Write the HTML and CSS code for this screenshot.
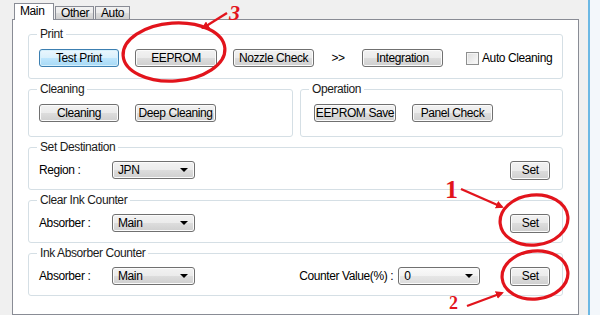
FILE: index.html
```html
<!DOCTYPE html>
<html lang="en">
<head>
    <meta charset="UTF-8">
    <title>Maintenance</title>
    <link rel="stylesheet" href="styles.css">
</head>
<body>

<div class="window">
    <div class="tabctl">
        <div class="tabs">
            <div class="tab active">Main</div>
            <div class="tab tab-other">Other</div>
            <div class="tab tab-auto">Auto</div>
        </div>

        <div class="panel">
            <!-- Print -->
            <fieldset class="group print">
                <legend>Print</legend>
                <div class="btn-row">
                    <button class="btn default w80">Test Print</button>
                    <button class="btn w82">EEPROM</button>
                    <button class="btn w81">Nozzle Check</button>
                    <span class="next">&gt;&gt;</span>
                    <button class="btn w81">Integration</button>
                    <label class="check"><span class="box"></span>Auto Cleaning</label>
                </div>
            </fieldset>

            <div class="pair">
                <fieldset class="group cleaning">
                    <legend>Cleaning</legend>
                    <div class="btn-row">
                        <button class="btn w80">Cleaning</button>
                        <button class="btn w81">Deep Cleaning</button>
                    </div>
                </fieldset>
                <fieldset class="group operation">
                    <legend>Operation</legend>
                    <div class="btn-row">
                        <button class="btn w82">EEPROM Save</button>
                        <button class="btn w81">Panel Check</button>
                    </div>
                </fieldset>
            </div>

            <fieldset class="group setting">
                <legend>Set Destination</legend>
                <div class="row">
                    <span class="label">Region :</span>
                    <div class="combo"><span>JPN</span><i class="arrow"></i></div>
                    <button class="btn set">Set</button>
                </div>
            </fieldset>

            <fieldset class="group setting">
                <legend>Clear Ink Counter</legend>
                <div class="row">
                    <span class="label">Absorber :</span>
                    <div class="combo"><span>Main</span><i class="arrow"></i></div>
                    <button class="btn set">Set</button>
                </div>
            </fieldset>

            <fieldset class="group setting">
                <legend>Ink Absorber Counter</legend>
                <div class="row">
                    <span class="label">Absorber :</span>
                    <div class="combo"><span>Main</span><i class="arrow"></i></div>
                    <span class="counter-label">Counter Value(%) :</span>
                    <div class="combo value"><span>0</span><i class="arrow"></i></div>
                    <button class="btn set near">Set</button>
                </div>
            </fieldset>
        </div>
    </div>
    <div class="side"></div>
</div>

<!-- marcas vermelhas por cima da janela -->
<svg class="marks" width="600" height="315" viewBox="0 0 600 315">
    <defs>
        <marker id="head" markerWidth="8" markerHeight="8" refX="6" refY="4" orient="auto" markerUnits="userSpaceOnUse">
            <path d="M0,0 L8,4 L0,8 Z" fill="#e2141c"/>
        </marker>
    </defs>
    <ellipse cx="174" cy="52" rx="51" ry="29" transform="rotate(-4 174 52)"/>
    <ellipse cx="534" cy="220" rx="34" ry="25" transform="rotate(-6 534 220)"/>
    <ellipse cx="535" cy="275" rx="33" ry="24" transform="rotate(-6 535 275)"/>
    <line x1="227" y1="13" x2="203" y2="28" marker-end="url(#head)"/>
    <line x1="461" y1="189" x2="502" y2="207" marker-end="url(#head)"/>
    <line x1="467" y1="306" x2="502" y2="293" marker-end="url(#head)"/>
    <text x="229" y="20" class="num italic">3</text>
    <text x="445" y="198" class="num">1</text>
    <text x="449" y="309" class="num small">2</text>
</svg>

</body>
</html>
```

FILE: styles.css
```css
* {
    box-sizing: border-box;
}
body {
    margin: 0;
    width: 600px;
    height: 315px;
    overflow: hidden;
    background: #f0f0f0;
    font-family: "Liberation Sans", Arial, sans-serif;
    font-size: 12px;
    letter-spacing: -0.4px;
    color: #000;
    position: relative;
}
.window {
    display: flex;
    height: 315px;
}
.tabctl {
    margin-left: 12px;
    width: 572px;
    display: flex;
    flex-direction: column;
}
.tabs {
    height: 19px;
    display: flex;
    align-items: flex-end;
    padding-left: 2px;
    gap: 1px;
}
.tab {
    height: 13px;
    line-height: 12px;
    padding-left: 5px;
    border: 1px solid #898c95;
    border-bottom: none;
    background: linear-gradient(#f2f2f2, #ebebeb 50%, #dddddd 50%, #cfcfcf);
    white-space: nowrap;
}
.tab.active {
    width: 40px;
    height: 17px;
    line-height: 15px;
    margin-bottom: -1px;
    background: #fff;
    position: relative;
    z-index: 1;
}
.tab-other { width: 39px; }
.tab-auto { width: 35px; }

.panel {
    flex: 1;
    background: #fff;
    border: 1px solid #898c95;
    padding: 7px 15px 0 15px;
    display: flex;
    flex-direction: column;
    gap: 3px;
}
.group {
    margin: 0;
    min-width: 0;
    border: 1px solid #d5dfe5;
    border-radius: 3px;
    padding: 8px 10px 11px 10px;
}
.group legend {
    margin-left: -2px;
    padding: 0 3px;
    line-height: 14px;
    color: #1a1a1a;
    white-space: nowrap;
}
.pair {
    display: flex;
    gap: 7px;
}
.cleaning {
    width: 265px;
    padding-bottom: 14px;
}
.operation {
    flex: 1;
    padding-left: 13px;
    padding-bottom: 14px;
}
.operation legend {
    margin-left: -5px;
}
.setting {
    padding: 6px 12px 9px 10px;
}

.btn-row {
    display: flex;
    align-items: center;
    gap: 16px;
    height: 18px;
}
.row {
    display: flex;
    align-items: center;
    height: 20px;
}

.btn {
    height: 18px;
    padding: 0;
    font: inherit;
    letter-spacing: inherit;
    color: #000;
    white-space: nowrap;
    border: 1px solid #707070;
    border-radius: 3px;
    background: linear-gradient(#f2f2f2, #ebebeb 50%, #dddddd 50%, #cfcfcf);
    box-shadow: inset 0 0 0 1px #fbfbfb;
}
.btn.default {
    border-color: #3c7fb1;
    background: linear-gradient(#eaf6fd, #d9f0fc 50%, #bee6fd 50%, #a7d9f5);
    box-shadow: inset 0 0 0 1px #d6f0fc;
}
.w80 { width: 80px; }
.w81 { width: 81px; }
.w82 { width: 82px; }
.btn.set {
    width: 40px;
    height: 19px;
    margin-left: auto;
}
.btn.set.near {
    margin-left: 30px;
}

.next {
    width: 16px;
    text-align: center;
}
.check {
    display: flex;
    align-items: center;
    margin-left: 7px;
    white-space: nowrap;
}
.check .box {
    flex: none;
    width: 13px;
    height: 13px;
    margin-right: 3px;
    border: 1px solid #8e8f8f;
    background: linear-gradient(135deg, #dcdcdc, #fbfbfb);
    box-shadow: inset 0 0 0 1px #f4f4f4;
}

.label {
    width: 73px;
    white-space: nowrap;
}
.combo {
    width: 83px;
    height: 18px;
    display: flex;
    align-items: center;
    justify-content: space-between;
    padding: 0 6px 0 5px;
    border: 1px solid #707070;
    border-radius: 3px;
    background: linear-gradient(#f2f2f2, #ebebeb 50%, #dddddd 50%, #cfcfcf);
    box-shadow: inset 0 0 0 1px #fbfbfb;
}
.combo.value {
    width: 82px;
    background: linear-gradient(#fafafa, #f2f2f2 50%, #e6e6e6 50%, #dcdcdc);
}
.arrow {
    width: 0;
    height: 0;
    border-left: 4px solid transparent;
    border-right: 4px solid transparent;
    border-top: 4px solid #000;
}
.counter-label {
    margin-left: auto;
    margin-right: 5px;
    white-space: nowrap;
}

.side {
    width: 16px;
    margin-left: 9px;
    border-left: 2px solid #6cb8e4;
    background: #f3f7fb;
}

.marks {
    position: absolute;
    top: 0;
    left: 0;
    pointer-events: none;
}
.marks ellipse {
    fill: none;
    stroke: #e2141c;
    stroke-width: 3.2;
}
.marks line {
    stroke: #e2141c;
    stroke-width: 2.4;
}
.marks .num {
    fill: #e2141c;
    font-family: "Liberation Serif", serif;
    font-weight: bold;
    font-size: 26px;
    letter-spacing: 0;
}
.marks .italic {
    font-style: italic;
    font-size: 22px;
}
.marks .small {
    font-size: 18px;
}
```
